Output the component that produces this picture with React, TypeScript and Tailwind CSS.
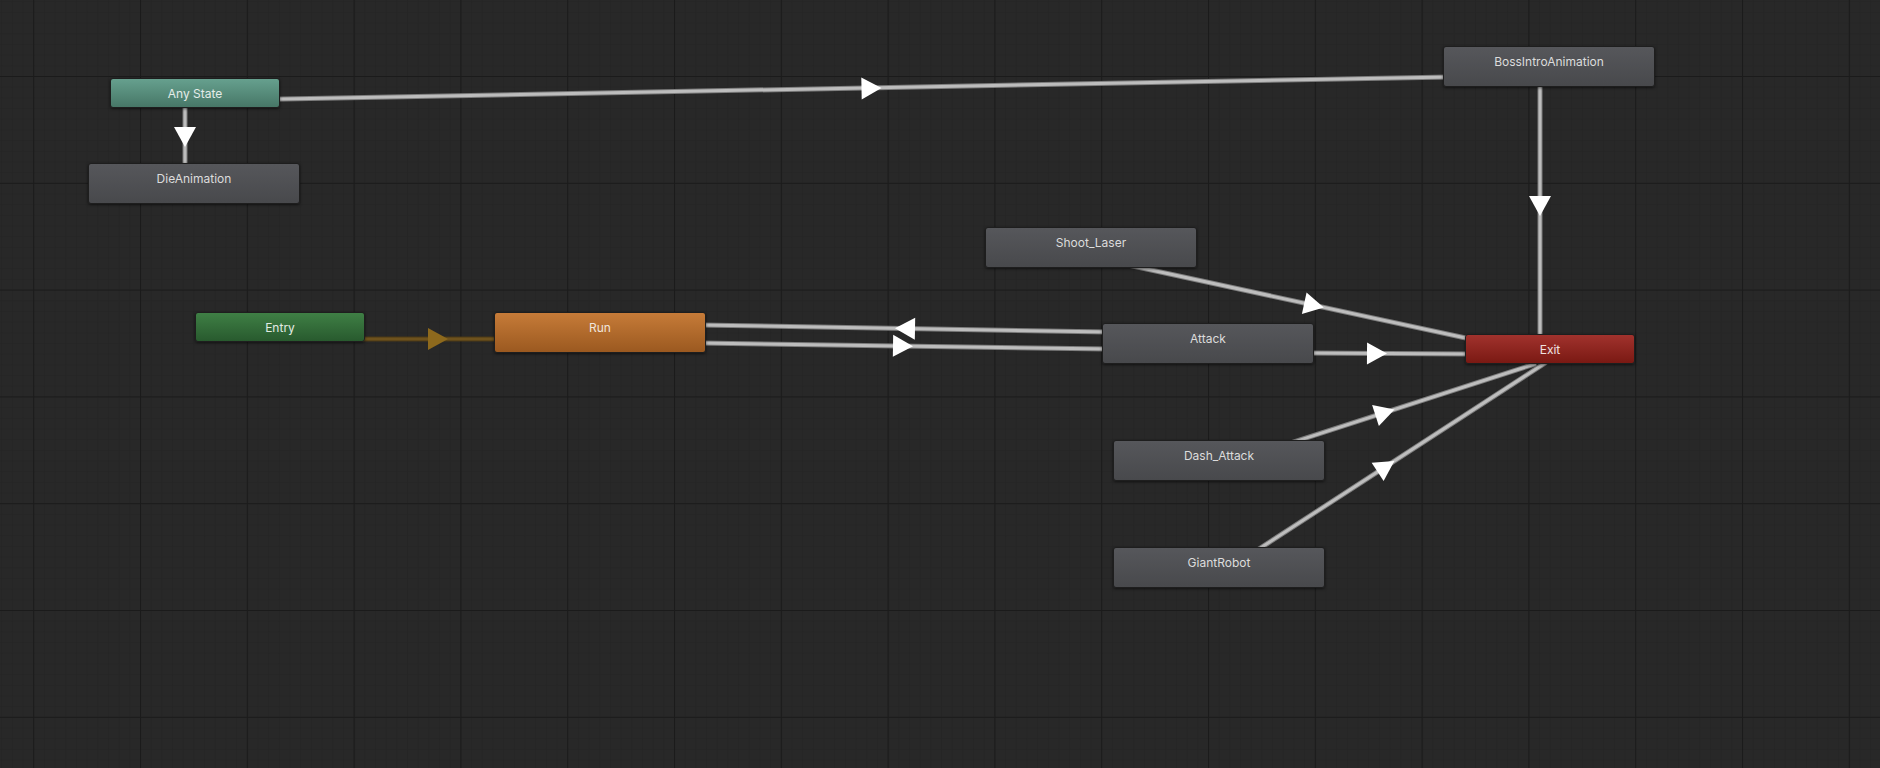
import React from "react";

type NodeDef = { label: string; x: number; y: number; w: number; h: number; cls: string; text: string };

const GRAY = "bg-[linear-gradient(to_bottom,#56575b,#48494c)]";
const nodes: NodeDef[] = [
  { label: "Any State", x: 110, y: 78, w: 170, h: 30, cls: "bg-[linear-gradient(to_bottom,#66a08e,#477767)]", text: "text-[#e4ece9]" },
  { label: "DieAnimation", x: 88, y: 163, w: 212, h: 41, cls: GRAY, text: "text-[#dcdcdc]" },
  { label: "BossIntroAnimation", x: 1443, y: 46, w: 212, h: 41, cls: GRAY, text: "text-[#dcdcdc]" },
  { label: "Shoot_Laser", x: 985, y: 227, w: 212, h: 41, cls: GRAY, text: "text-[#dcdcdc]" },
  { label: "Entry", x: 195, y: 312, w: 170, h: 30, cls: "bg-[linear-gradient(to_bottom,#3f7f45,#285a2e)]", text: "text-[#e2ebe3]" },
  { label: "Run", x: 494, y: 312, w: 212, h: 41, cls: "bg-[linear-gradient(to_bottom,#c67b38,#9b5920)]", text: "text-[#f0e6dc]" },
  { label: "Attack", x: 1102, y: 323, w: 212, h: 41, cls: GRAY, text: "text-[#dcdcdc]" },
  { label: "Exit", x: 1465, y: 334, w: 170, h: 30, cls: "bg-[linear-gradient(to_bottom,#a1322d,#7a1913)]", text: "text-[#f0e2e1]" },
  { label: "Dash_Attack", x: 1113, y: 440, w: 212, h: 41, cls: GRAY, text: "text-[#dcdcdc]" },
  { label: "GiantRobot", x: 1113, y: 547, w: 212, h: 41, cls: GRAY, text: "text-[#dcdcdc]" },
];

type Edge = { x1: number; y1: number; x2: number; y2: number; ax: number; ay: number; orange?: boolean };

const edges: Edge[] = [
  { x1: 270, y1: 99.2, x2: 1450, y2: 76.9, ax: 871.5, ay: 88.2 },
  { x1: 185, y1: 100, x2: 185, y2: 170, ax: 185, ay: 137 },
  { x1: 1540, y1: 80, x2: 1540, y2: 340, ax: 1540, ay: 206 },
  { x1: 360, y1: 339, x2: 500, y2: 339, ax: 438, ay: 339, orange: true },
  { x1: 700, y1: 343, x2: 1108, y2: 349, ax: 903, ay: 346 },
  { x1: 1108, y1: 332, x2: 700, y2: 325, ax: 905, ay: 328.5 },
  { x1: 1305, y1: 353, x2: 1472, y2: 354, ax: 1377, ay: 353.5 },
  { x1: 1120, y1: 263.3, x2: 1475, y2: 340, ax: 1314, ay: 305.3 },
  { x1: 1262, y1: 452.3, x2: 1536, y2: 363.6, ax: 1385, ay: 412.5 },
  { x1: 1250, y1: 554.8, x2: 1546, y2: 362.4, ax: 1386, ay: 466.4 },
];

function arrowPoints(e: Edge) {
  const dx = e.x2 - e.x1;
  const dy = e.y2 - e.y1;
  const len = Math.hypot(dx, dy);
  const ux = dx / len;
  const uy = dy / len;
  const nx = -uy;
  const ny = ux;
  const L = 10;
  const W = 11;
  const tip = [e.ax + ux * L, e.ay + uy * L];
  const b1 = [e.ax - ux * L + nx * W, e.ay - uy * L + ny * W];
  const b2 = [e.ax - ux * L - nx * W, e.ay - uy * L - ny * W];
  return [tip, b1, b2].map((p) => p.join(",")).join(" ");
}

export default function App() {
  return (
    <div className="relative w-[1880px] h-[768px] overflow-hidden bg-[#282828] font-['Inter','Liberation_Sans',sans-serif]">
      <svg className="absolute inset-0" width={1880} height={768}>
        <defs>
          <pattern id="minor" x={33.2} y={76} width={10.68} height={10.68} patternUnits="userSpaceOnUse">
            <path d="M 0 0 L 10.68 0 M 0 0 L 0 10.68" stroke="#232323" strokeWidth={1} fill="none" />
          </pattern>
          <pattern id="major" x={33.2} y={76} width={106.8} height={106.8} patternUnits="userSpaceOnUse">
            <path d="M 0 0.5 L 106.8 0.5 M 0.5 0 L 0.5 106.8" stroke="#1b1b1b" strokeWidth={1.2} fill="none" />
          </pattern>
        </defs>
        <rect width={1880} height={768} fill="url(#minor)" />
        <rect width={1880} height={768} fill="url(#major)" />
        {edges.map((e, i) => (
          <g key={"l" + i}>
            <line x1={e.x1} y1={e.y1} x2={e.x2} y2={e.y2} stroke={e.orange ? "#4a3816" : "#7d7d7d"} strokeWidth={5} />
            <line x1={e.x1} y1={e.y1} x2={e.x2} y2={e.y2} stroke={e.orange ? "#6e521d" : "#bdbdbd"} strokeWidth={3} />
          </g>
        ))}
        {edges.map((e, i) => (
          <polygon key={"a" + i} points={arrowPoints(e)} fill={e.orange ? "#8d691d" : "#ffffff"} />
        ))}
      </svg>
      {nodes.map((n) => (
        <div
          key={n.label}
          className={`absolute rounded-[3px] border border-[#1e1e1e] shadow-[0_1px_3px_rgba(0,0,0,0.55)] flex justify-center pt-[7px] text-[12px] leading-[16px] ${n.cls} ${n.text}`}
          style={{ left: n.x, top: n.y, width: n.w, height: n.h }}
        >
          {n.label}
        </div>
      ))}
    </div>
  );
}
